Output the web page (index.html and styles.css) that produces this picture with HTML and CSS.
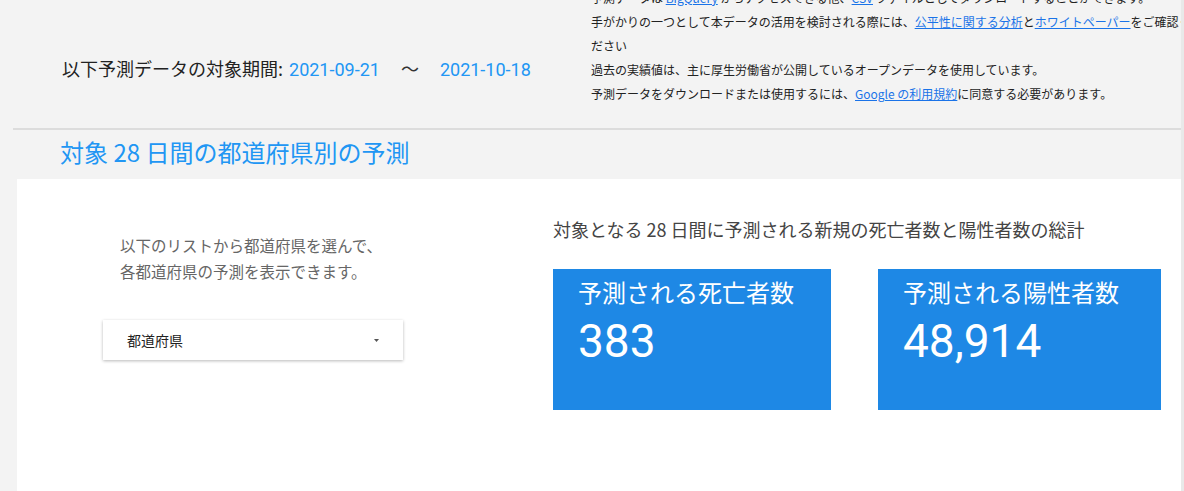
FILE: index.html
```html
<!DOCTYPE html>
<html lang="ja">
<head>
<meta charset="utf-8">
<title>都道府県別の予測</title>
<link rel="stylesheet" href="styles.css">
</head>
<body>
<div class="page">
  <header class="top">
    <div class="period">
      <span class="period-label">以下予測データの対象期間:</span>
      <span class="date">2021-09-21</span>
      <span class="tilde">〜</span>
      <span class="date">2021-10-18</span>
    </div>
    <div class="notes">
      <p>予測データは <a href="#">BigQuery</a> からアクセスできる他、<a href="#">CSV</a> ファイルとしてダウンロードすることができます。</p>
      <p>手がかりの一つとして本データの活用を検討される際には、<a href="#">公平性に関する分析</a>と<a href="#">ホワイトペーパー</a>をご確認ください</p>
      <p>過去の実績値は、主に厚生労働省が公開しているオープンデータを使用しています。</p>
      <p>予測データをダウンロードまたは使用するには、<a href="#">Google の利用規約</a>に同意する必要があります。</p>
    </div>
  </header>

  <h2 class="section-title">対象 28 日間の都道府県別の予測</h2>

  <section class="card">
    <div class="card-left">
      <p class="desc">以下のリストから都道府県を選んで、各都道府県の予測を表示できます。</p>
      <div class="select">
        <span class="select-label">都道府県</span>
        <svg class="caret" width="5" height="3" viewBox="0 0 5 3"><polygon points="0,0 5,0 2.5,3" fill="#555"/></svg>
      </div>
    </div>
    <div class="card-right">
      <p class="totals-head">対象となる 28 日間に予測される新規の死亡者数と陽性者数の総計</p>
      <div class="tiles">
        <div class="tile tile-deaths">
          <div class="tile-title">予測される死亡者数</div>
          <div class="tile-value">383</div>
        </div>
        <div class="tile tile-cases">
          <div class="tile-title">予測される陽性者数</div>
          <div class="tile-value">48,914</div>
        </div>
      </div>
    </div>
  </section>
</div>
</body>
</html>
```

FILE: styles.css
```css
html, body {
  margin: 0;
  padding: 0;
  overflow: hidden;
  height: 100%;
}

body {
  background: #f3f3f3;
  font-family: "Noto Sans CJK JP", "Noto Sans", sans-serif;
  color: #222;
}

.page {
  border-right: 3px solid #e9e9e9;
  height: 100%;
  box-sizing: border-box;
  overflow: hidden;
}

.top {
  display: flex;
  height: 128px;
  margin-left: 13px;
  border-bottom: 2px solid #dcdcdc;
  overflow: hidden;
}

.period {
  box-sizing: border-box;
  width: 578px;
  flex: none;
  padding-left: 49px;
  padding-top: 54px;
  display: flex;
  align-items: baseline;
  font-size: 18px;
  line-height: 28px;
  color: #222;
}

.period-label {
  white-space: nowrap;
}

.date {
  font-family: Roboto, "Liberation Sans", sans-serif;
  color: #2196f3;
  white-space: nowrap;
}

.period-label + .date {
  margin-left: 6px;
}

.tilde {
  margin: 0 21px 0 21px;
  color: #333;
}

.notes {
  flex: none;
  width: 600px;
  margin-top: -14px;
  font-size: 12px;
  line-height: 24px;
  color: #222;
}

.notes p {
  margin: 0;
}

.notes a {
  color: #1a73e8;
  text-decoration: underline;
}

.section-title {
  margin: 4px 0 9px;
  padding-left: 60px;
  font-size: 24px;
  line-height: 36px;
  font-weight: 400;
  color: #2196f3;
}

.card {
  display: flex;
  margin-left: 17px;
  background: #fff;
  height: 312px;
}

.card-left {
  box-sizing: border-box;
  width: 536px;
  flex: none;
  padding-left: 86px;
  padding-top: 53px;
}

.desc {
  margin: 0 0 0 17px;
  width: 270px;
  font-size: 15.5px;
  line-height: 26px;
  color: #666;
}

.select {
  box-sizing: border-box;
  width: 300px;
  height: 40px;
  margin-top: 36px;
  padding: 0 24px;
  display: flex;
  align-items: center;
  justify-content: space-between;
  background: #fff;
  box-shadow: 0 1px 3px rgba(0, 0, 0, 0.28);
  font-size: 14px;
  color: #222;
}

.caret {
  display: block;
}

.card-right {
  padding-top: 37px;
}

.totals-head {
  margin: 0;
  font-size: 18px;
  line-height: 27px;
  color: #444;
  white-space: nowrap;
}

.tiles {
  display: flex;
  gap: 47px;
  margin-top: 26px;
}

.tile {
  box-sizing: border-box;
  height: 141px;
  padding: 7px 0 0 25px;
  background: #1e88e5;
  color: #fff;
}

.tile-deaths {
  width: 278px;
}

.tile-cases {
  width: 283px;
}

.tile-title {
  font-size: 24px;
  line-height: 32px;
}

.tile-value {
  margin-top: 6px;
  font-family: Roboto, "Liberation Sans", sans-serif;
  font-size: 46px;
  line-height: 54px;
}
```
